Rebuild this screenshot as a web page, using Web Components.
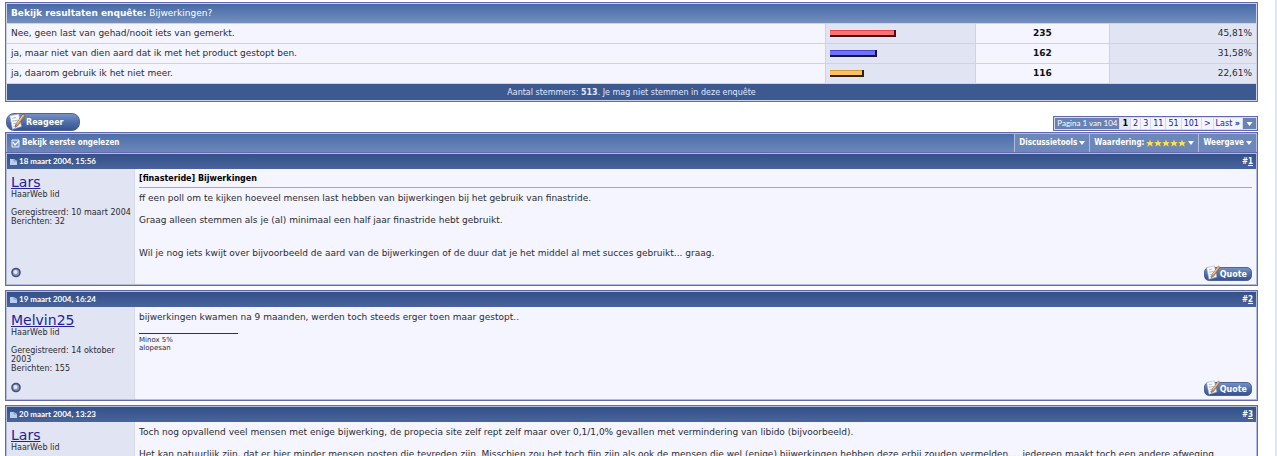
<!DOCTYPE html>
<html lang="nl">
<head>
<meta charset="utf-8">
<title>Bijwerkingen? - HaarWeb forum</title>
<style>
  html {
    background: #ffffff;
    border-right: 2px solid #dce8fa;
    min-height: 100%;
    overflow: hidden;
  }

  body {
    --fw-border: #6468ae;
    --fw-gap: #b3bbdc;
    --fw-alt1: #f5f5ff;
    --fw-alt2: #e1e4f2;
    --fw-link: #22229c;
    --fw-small: "DejaVu Sans Condensed", "DejaVu Sans", sans-serif;
    --fw-narrow: Lato, sans-serif;

    margin: 2px 17px 0 5px;
    color: #2b2b33;
    font: 9px/11px "DejaVu Sans", sans-serif;
  }

  .toolbar {
    display: flex;
    justify-content: space-between;
    align-items: flex-end;
    padding-top: 10px;
  }
</style>
</head>
<body>
  <forum-poll question="Bijwerkingen?"></forum-poll>

  <div class="toolbar">
    <post-button size="large">Reageer</post-button>
    <page-nav></page-nav>
  </div>

  <thread-tools></thread-tools>

  <forum-post date="18 maart 2004, 15:56" number="1" user="Lars" joined="10 maart 2004" posts="32">
    <span slot="title">[finasteride] Bijwerkingen</span>
    ff een poll om te kijken hoeveel mensen last hebben van bijwerkingen bij het gebruik van finastride.<br><br>
    Graag alleen stemmen als je (al) minimaal een half jaar finastride hebt gebruikt.<br><br><br>
    Wil je nog iets kwijt over bijvoorbeeld de aard van de bijwerkingen of de duur dat je het middel al met succes gebruikt... graag.
  </forum-post>

  <forum-post date="19 maart 2004, 16:24" number="2" user="Melvin25" joined="14 oktober 2003" posts="155">
    bijwerkingen kwamen na 9 maanden, werden toch steeds erger toen maar gestopt..
    <span slot="signature">Minox 5%<br>alopesan</span>
  </forum-post>

  <forum-post date="20 maart 2004, 13:23" number="3" user="Lars" joined="10 maart 2004" posts="32">
    Toch nog opvallend veel mensen met enige bijwerking, de propecia site zelf rept zelf maar over 0,1/1,0% gevallen met vermindering van libido (bijvoorbeeld).<br><br>
    Het kan natuurlijk zijn, dat er hier minder mensen posten die tevreden zijn. Misschien zou het toch fijn zijn als ook de mensen die wel (enige) bijwerkingen hebben deze erbij zouden vermelden.... iedereen maakt toch een andere afweging.
  </forum-post>

<script>
class ForumElement extends HTMLElement {
  constructor() {
    super();
    this.attachShadow({ mode: "open" });
  }

  connectedCallback() {
    const template = document.createElement("template");
    template.innerHTML = this.render();
    this.shadowRoot.replaceChildren(template.content.cloneNode(true));
  }
}

class ForumPoll extends ForumElement {
  get options() {
    return [
      { text: "Nee, geen last van gehad/nooit iets van gemerkt.", votes: 235, share: "45,81%", color: "red", width: 66 },
      { text: "ja, maar niet van dien aard dat ik met het product gestopt ben.", votes: 162, share: "31,58%", color: "blue", width: 47 },
      { text: "ja, daarom gebruik ik het niet meer.", votes: 116, share: "22,61%", color: "orange", width: 34 },
    ];
  }

  render() {
    const rows = this.options
      .map(
        (o) => `
        <tr>
          <td>${o.text}</td>
          <td class="graph"><div class="bar ${o.color}" style="width: ${o.width}px"></div></td>
          <td class="votes">${o.votes}</td>
          <td class="share">${o.share}</td>
        </tr>`
      )
      .join("");

    return /*html*/ `
      <style>
        :host { display: block; }
        table {
          box-sizing: border-box;
          width: 100%;
          border: 1px solid var(--fw-border);
          border-spacing: 1px;
          background: #cdd2e6;
          font: inherit;
        }
        th {
          height: 19px;
          padding: 0 4px;
          background: linear-gradient(#4669a6, #758fbe);
          color: #ffffff;
          font-weight: normal;
          text-align: left;
        }
        td {
          height: 19px;
          box-sizing: border-box;
          padding: 0 4px;
          background: var(--fw-alt1);
        }
        .graph { width: 149px; background: var(--fw-alt2); }
        .votes { width: 133px; color: #111; font-weight: bold; text-align: center; }
        .share { width: 146px; background: var(--fw-alt2); text-align: right; }
        .bar {
          box-sizing: border-box;
          height: 7px;
          border-right: 2px solid;
          border-bottom: 2px solid;
        }
        .red { background: linear-gradient(#e84848 1px, #ff7070 1px); border-color: #401018; }
        .blue { background: linear-gradient(#4848d8 1px, #7070ff 1px); border-color: #14143c; }
        .orange { background: linear-gradient(#d89838 1px, #ffc060 1px); border-color: #302010; }
        .footer {
          height: 16px;
          background: #3c5a90;
          color: #e0e8ff;
          font-size: 8px;
          text-align: center;
        }
      </style>
      <table>
        <thead>
          <tr><th colspan="4"><b>Bekijk resultaten enquête:</b> ${this.getAttribute("question")}</th></tr>
        </thead>
        <tbody>${rows}</tbody>
        <tfoot>
          <tr><td class="footer" colspan="4">Aantal stemmers: <b>513</b>. Je mag niet stemmen in deze enquête</td></tr>
        </tfoot>
      </table>
    `;
  }
}

class PostButton extends ForumElement {
  render() {
    return /*html*/ `
      <style>
        :host { display: block; }
        button {
          display: flex;
          align-items: center;
          height: 14px;
          margin: 1px 0 0;
          padding: 0 4px 0 0;
          border: 1px solid #4a669c;
          border-radius: 5px;
          background: linear-gradient(#7490c4, #4a68a4 60%, #38548c);
          color: #ffffff;
          font: bold 8px/9px "DejaVu Sans", sans-serif;
        }
        svg { width: 15px; height: 16px; margin-top: -3px; }
        :host([size="large"]) button {
          height: 18px;
          margin: 1px 0 0 1px;
          padding-right: 15px;
          border-radius: 8px;
        }
        :host([size="large"]) svg { width: 19px; height: 18px; margin-top: -1px; }
      </style>
      <button type="button">
        <svg viewBox="0 0 19 20" aria-hidden="true">
          <path d="M2 3l10-2 3 14-10 3z" fill="#f7f9fc" stroke="#9aa8c0" stroke-width=".7"/>
          <path d="M5 6l4-1M5 9l6-1M6 12l5-1M6 15l6-2" stroke="#98a4b8" stroke-width=".9"/>
          <path d="M17 1l2 2-8 11-3 2 1-4z" fill="#d99a5c" stroke="#6d4b38" stroke-width=".7"/>
          <path d="M17 2l-7 10" stroke="#ffdba9"/>
        </svg>
        <slot></slot>
      </button>
    `;
  }
}

class PageNav extends ForumElement {
  render() {
    const links = ["2", "3", "11", "51", "101", "&gt;", "Last <b>»</b>"]
      .map((label) => `<a href="#">${label}</a>`)
      .join("");

    return /*html*/ `
      <style>
        :host { display: block; }
        nav {
          display: flex;
          gap: 1px;
          padding: 1px;
          border: 1px solid var(--fw-border);
          background: #d5daec;
          font-size: 8px;
          line-height: 11px;
        }
        span, a, button { padding: 0 2px; }
        .label { background: #6882b4; color: #ffffff; font-family: var(--fw-narrow); }
        .current { background: var(--fw-alt2); color: #000; font-weight: bold; }
        a { background: var(--fw-alt1); color: var(--fw-link); text-decoration: none; }
        button {
          display: flex;
          align-items: center;
          padding: 0 3px;
          border: 0;
          background: #6882b4;
        }
        svg { width: 7px; height: 4px; }
      </style>
      <nav>
        <span class="label">Pagina 1 van 104</span>
        <span class="current">1</span>
        ${links}
        <button type="button" aria-label="Ga naar pagina">
          <svg viewBox="0 0 6 4"><path d="M0 0h6L3 4z" fill="#fff"/></svg>
        </button>
      </nav>
    `;
  }
}

class ThreadTools extends ForumElement {
  render() {
    const arrow = `<svg class="arrow" viewBox="0 0 6 4" aria-hidden="true"><path d="M0 0h6L3 4z" fill="#fff"/></svg>`;
    const star = `<svg class="star" viewBox="0 0 8 8" aria-hidden="true"><path d="M4 0l1 3h3L6 5l1 3-3-2-3 2 1-3-2-2h3z" fill="#ffe060" stroke="#8a8350" stroke-width=".3"/></svg>`;

    return /*html*/ `
      <style>
        :host {
          display: flex;
          gap: 1px;
          margin-top: 1px;
          padding: 1px 1px 0;
          border: 1px solid var(--fw-border);
          border-bottom: 0;
          background: var(--fw-gap);
          font: bold 8px/18px var(--fw-small);
        }
        .first, button {
          display: flex;
          align-items: center;
          gap: 2px;
          height: 18px;
          padding: 0 4px;
          border: 0;
          background: linear-gradient(#4c6eaa, #6c88ba);
          color: #ffffff;
          font: inherit;
        }
        .first { flex: 1; }
        button { background: #6c87ba; }
        a { color: inherit; text-decoration: none; }
        .check { width: 9px; height: 9px; }
        .arrow { width: 6px; height: 4px; }
        .stars { display: flex; }
        .star { width: 8px; height: 8px; }
      </style>
      <div class="first">
        <svg class="check" viewBox="0 0 9 9" aria-hidden="true">
          <path d="M1 1h7v7H1z" fill="#7892c4" stroke="#e8f0ff"/>
          <path d="M2 3l2 3 4-4" fill="none" stroke="#fff" stroke-width="1.3"/>
        </svg>
        <a href="#">Bekijk eerste ongelezen</a>
      </div>
      <button type="button">Discussietools ${arrow}</button>
      <button type="button">Waardering: <span class="stars">${star.repeat(5)}</span> ${arrow}</button>
      <button type="button">Weergave ${arrow}</button>
    `;
  }
}

class ForumPost extends ForumElement {
  render() {
    const hasTitle = this.querySelector('[slot="title"]');
    const hasSignature = this.querySelector('[slot="signature"]');
    const number = this.getAttribute("number");

    return /*html*/ `
      <style>
        :host {
          display: block;
          margin-bottom: 4px;
          padding: 1px;
          border: 1px solid var(--fw-border);
          background: var(--fw-gap);
        }
        header {
          display: flex;
          align-items: center;
          gap: 2px;
          height: 15px;
          padding: 0 3px;
          background: linear-gradient(#34508a, #48649a);
          color: #ffffff;
          font: bold 8px/15px var(--fw-narrow);
        }
        .number { margin-left: auto; font-family: var(--fw-small); }
        .number a { color: inherit; }
        .page { width: 7px; height: 7px; }
        .body {
          display: grid;
          grid-template-columns: 127px 1fr;
          gap: 1px;
          min-height: 92px;
          background: #d6daea;
        }
        .user, .message {
          display: flex;
          flex-direction: column;
          padding: 5px 4px 3px;
          background: var(--fw-alt1);
        }
        .user {
          padding: 5px 2px 6px 4px;
          background: var(--fw-alt2);
          font-size: 8px;
          line-height: 9px;
        }
        .name { color: var(--fw-link); font-size: 14px; line-height: 16px; }
        .info { margin-top: 9px; }
        .status { width: 11px; height: 11px; margin-top: auto; }
        h2 { margin: 0; color: #000; font: bold 8px/9px "DejaVu Sans", sans-serif; }
        hr {
          width: 100%;
          margin: 4px 0 5px;
          border: 0;
          border-top: 1px solid #a8a8b0;
        }
        .signature { margin-top: 10px; font-size: 7px; line-height: 8px; }
        .signature::before {
          content: "";
          display: block;
          width: 99px;
          margin-bottom: 2px;
          border-top: 1px solid #333;
        }
        .actions { display: flex; justify-content: flex-end; margin-top: auto; padding-top: 7px; }
      </style>
      <header>
        <svg class="page" viewBox="0 0 7 7" aria-hidden="true">
          <path d="M0 1h4l3 2v4H0z" fill="#b8cdf0"/>
          <path d="M4 1v2h3" fill="none" stroke="#6f8cc0" stroke-width=".8"/>
        </svg>
        <span>${this.getAttribute("date")}</span>
        <span class="number">#<a href="#">${number}</a></span>
      </header>
      <div class="body">
        <div class="user">
          <a class="name" href="#">${this.getAttribute("user")}</a>
          <div>HaarWeb lid</div>
          <div class="info">Geregistreerd: ${this.getAttribute("joined")}</div>
          <div>Berichten: ${this.getAttribute("posts")}</div>
          <svg class="status" viewBox="0 0 11 11" role="img" aria-label="Offline">
            <circle cx="5" cy="5.500" r="4" fill="#8c9ab4" stroke="#3f4f88" stroke-width="1.600"/>
            <circle cx="4.500" cy="5" r="2" fill="#e4e9f2"/>
          </svg>
        </div>
        <div class="message">
          ${hasTitle ? `<h2><slot name="title"></slot></h2><hr>` : ""}
          <div><slot></slot></div>
          ${hasSignature ? `<div class="signature"><slot name="signature"></slot></div>` : ""}
          <div class="actions"><post-button>Quote</post-button></div>
        </div>
      </div>
    `;
  }
}

customElements.define("forum-poll", ForumPoll);
customElements.define("post-button", PostButton);
customElements.define("page-nav", PageNav);
customElements.define("thread-tools", ThreadTools);
customElements.define("forum-post", ForumPost);
</script>
</body>
</html>
